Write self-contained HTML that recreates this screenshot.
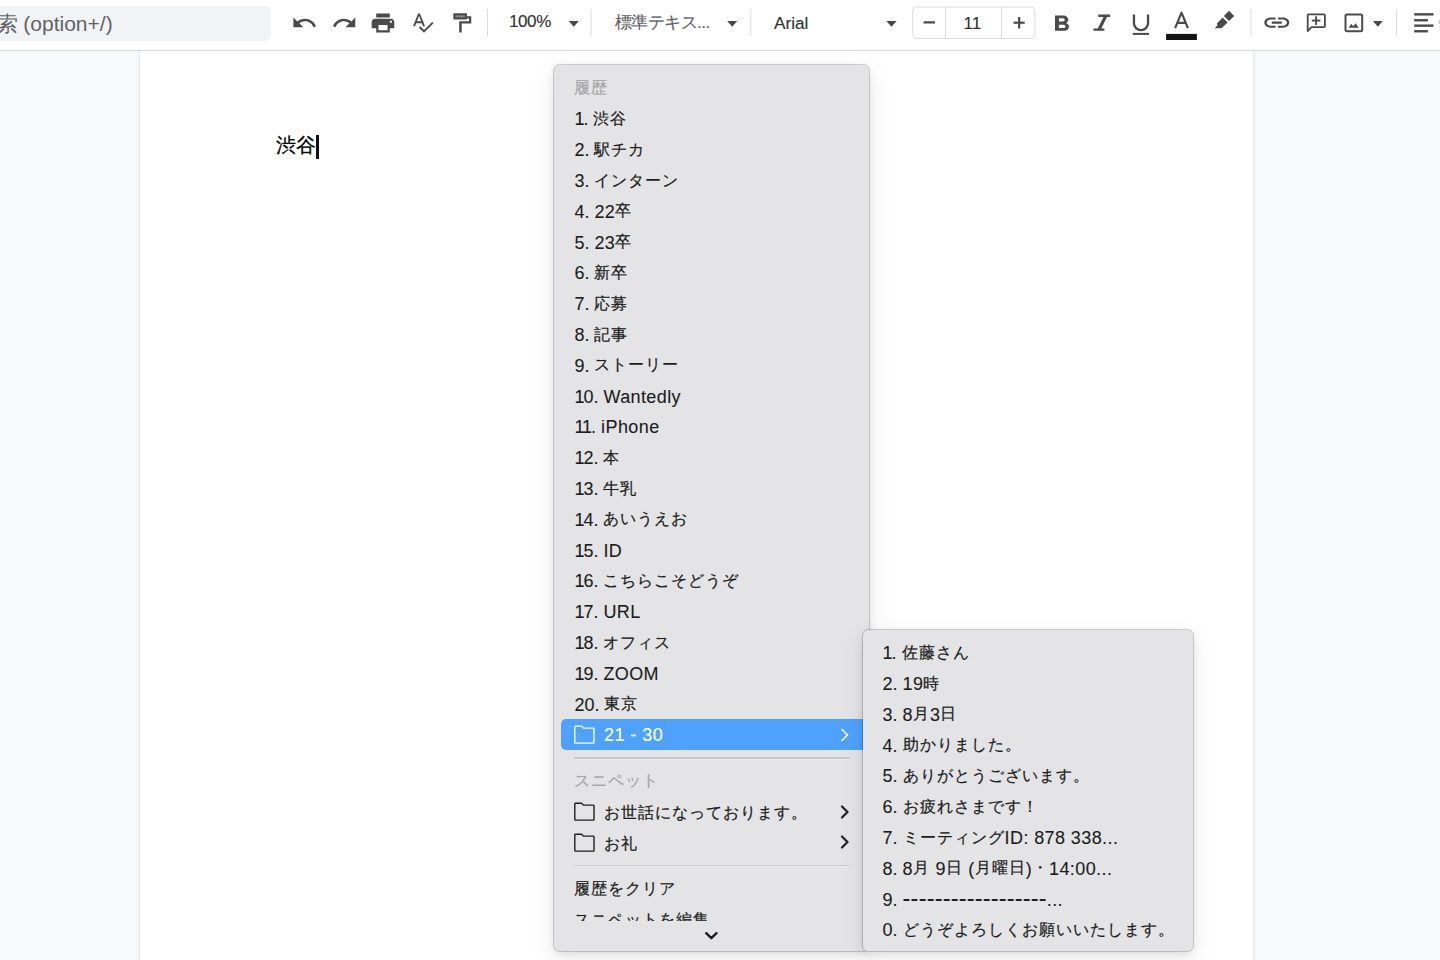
<!DOCTYPE html>
<html lang="ja">
<head>
<meta charset="utf-8">
<style>
*{margin:0;padding:0;box-sizing:border-box}
html,body{width:1440px;height:960px;overflow:hidden;background:#f8f9fb;font-family:"Liberation Sans",sans-serif;position:relative}
.abs{position:absolute}
#toolbar{position:absolute;left:0;top:0;width:1440px;height:51px;background:#fff;border-bottom:1px solid #d9d9d9;z-index:2}
#search{position:absolute;left:-20px;top:6px;width:291px;height:35px;border-radius:6px;background:#f2f3f5}
#search span{position:absolute;left:16.5px;top:4px;font-size:21px;color:#5f6368;white-space:nowrap;letter-spacing:0px}
.ico{position:absolute;fill:#444746}
.sep{position:absolute;top:9px;width:1px;height:27px;background:#dadce0}
.tt{position:absolute;font-size:17px;color:#333;white-space:nowrap;-webkit-text-stroke:0.15px currentColor}
.dd{position:absolute;width:0;height:0;border-left:5.5px solid transparent;border-right:5.5px solid transparent;border-top:5.5px solid #444746}
#page{position:absolute;left:140px;top:50px;width:1113px;height:920px;background:#fff;box-shadow:0 0 0 1px #e9e9e9,0 0 4px 1px rgba(0,0,0,.06)}
#doctext{position:absolute;left:276px;top:131.5px;font-size:20px;color:#000;white-space:nowrap;-webkit-text-stroke:0.3px #000}
#caret{position:absolute;left:316.2px;top:135px;width:2.7px;height:23.5px;background:#111}
.menu{position:absolute;background:#e4e4e6;border-radius:5.5px;box-shadow:0 0 0 1px rgba(0,0,0,.17),0 3px 10px rgba(0,0,0,.10),0 8px 28px rgba(0,0,0,.07)}
.dash{font-style:normal;font-size:23.4px;letter-spacing:0.22px;line-height:1px;position:relative;top:0.3px}
.row{position:absolute;left:0;height:30.8px;width:100%;font-size:18px;color:#1c1c1c;white-space:nowrap;-webkit-text-stroke:0.1px currentColor}
.o{font-style:normal;letter-spacing:-1px}
.r{font-style:normal;letter-spacing:0.4px}
.row span{position:absolute;left:20px;top:2.3px;line-height:30.8px}
.j{font-weight:normal;font-size:16px;letter-spacing:1px;position:relative;top:-1.5px;-webkit-text-stroke:0.22px currentColor}
.hdr{color:#a6a6a8}
.wh{color:#fff}
.hl{position:absolute;left:7px;width:306px;height:31.2px;background:#4ea2fd;border-radius:5px}
.msep{position:absolute;left:19.5px;width:276.5px;height:1.5px;background:#c8c8ca;box-shadow:0 1px 0 rgba(255,255,255,.35)}
.clip{position:absolute;left:0;width:100%;height:17px;overflow:hidden}
</style>
</head>
<body>
<div id="toolbar">
  <div id="search"><span>索 (option+/)</span></div>
<svg class="abs" style="left:0;top:0" width="1440" height="50" viewBox="0 0 1440 50"><path transform="matrix(1.1041 0 0 1.0667 291.192 10.133)" d="M12.5 8c-2.65 0-5.05.99-6.9 2.6L2 7v9h9l-3.62-3.62c1.39-1.16 3.16-1.88 5.12-1.88 3.54 0 6.55 2.31 7.6 5.5l2.37-.78C21.08 11.03 17.15 8 12.5 8z" fill="#4a4a4a"/><path transform="matrix(1.0899 0 0 1.0667 331.322 10.133)" d="M18.4 10.6C16.55 8.99 14.15 8 11.5 8c-4.65 0-8.58 3.03-9.96 7.22L3.9 16c1.05-3.19 4.05-5.5 7.6-5.5 1.95 0 3.73.72 5.12 1.88L13 16h9V7l-3.6 3.6z" fill="#4a4a4a"/><path transform="matrix(1.1300 0 0 1.0556 369.440 10.233)" d="M19 8H5c-1.66 0-3 1.34-3 3v6h4v4h12v-4h4v-6c0-1.66-1.34-3-3-3zm-3 11H8v-5h8v5zm3-7c-.55 0-1-.45-1-1s.45-1 1-1 1 .45 1 1-.45 1-1 1zm-1-9H6v4h12V3z" fill="#4a4a4a"/><path transform="matrix(0.9981 0 0 0.9949 410.545 10.415)" d="M12.45 16h2.09L9.43 3H7.57L2.46 16h2.09l1.12-3h5.64l1.14 3zm-6.02-5L8.5 5.48 10.57 11H6.43zm15.16.59l-8.09 8.09L9.83 16l-1.41 1.41 5.09 5.09L23 13l-1.41-1.41z" fill="#4a4a4a"/><rect x="453.3" y="13.15" width="13.7" height="6.45" rx="0.8" fill="#4a4a4a"/><rect x="455.4" y="15.4" width="9.5" height="1.9" fill="#8a8a8a"/><path d="M467 16.3 H471.25 V23.6 H461.7 V32.4 H459.2 V21.3 H469 V18.6 H467 Z" fill="#4a4a4a"/><rect x="487.0" y="9" width="1" height="27" fill="#dadce0"/><rect x="590.5" y="9" width="1" height="27" fill="#dadce0"/><rect x="750.3" y="9" width="1" height="27" fill="#dadce0"/><rect x="1250.5" y="9" width="1" height="27" fill="#dadce0"/><rect x="1396.0" y="9" width="1" height="27" fill="#dadce0"/><path d="M568.7 21.1 H578.8 L573.75 26.7 Z" fill="#4a4a4a"/><path d="M727.2 21.1 H737.2 L732.2 26.7 Z" fill="#4a4a4a"/><path d="M886.3 21.1 H896.7 L891.5 26.7 Z" fill="#4a4a4a"/><path d="M1372.9 21.1 H1382.8 L1377.85 26.7 Z" fill="#4a4a4a"/><rect x="912.7" y="7" width="122.2" height="31.4" rx="4" fill="none" stroke="#dadce0" stroke-width="1"/><rect x="945" y="7" width="1" height="31.4" fill="#dadce0"/><rect x="1001" y="7" width="1" height="31.4" fill="#dadce0"/><rect x="923.6" y="21.3" width="11.4" height="2.2" fill="#4a4a4a"/><rect x="1013.6" y="21.6" width="11.1" height="2.2" fill="#4a4a4a"/><rect x="1018.05" y="17" width="2.2" height="11.5" fill="#4a4a4a"/><path transform="matrix(1.3023 0 0 1.0929 1045.884 11.129)" d="M15.6 10.79c.97-.67 1.65-1.77 1.65-2.79 0-2.26-1.75-4-4-4H7v14h7.04c2.09 0 3.71-1.7 3.71-3.79 0-1.52-.86-2.82-2.15-3.42zM10 6.5h3c.83 0 1.5.67 1.5 1.5s-.67 1.5-1.5 1.5h-3v-3zm3.5 9H10v-3h3.5c.83 0 1.5.67 1.5 1.5s-.67 1.5-1.5 1.5z" fill="#4a4a4a"/><path d="M1098.3 14.6 H1110.1 V16.9 H1107 L1101.3 28.5 H1104.4 V30.8 H1093.5 V28.5 H1097.8 L1103.5 16.9 H1098.3 Z" fill="#4a4a4a"/><path d="M1133.95 14.6 V23.3 A7.05 6.9 0 0 0 1148.05 23.3 V14.6" fill="none" stroke="#4a4a4a" stroke-width="2.3"/><rect x="1132.8" y="32.9" width="16.2" height="2" fill="#4a4a4a"/><path d="M1175.1 28.2 L1181.5 12.6 L1187.9 28.2 M1177.3 22.9 H1185.7" fill="none" stroke="#4a4a4a" stroke-width="2.2" stroke-linejoin="round"/><rect x="1166.1" y="33.9" width="30.8" height="6.1" fill="#141414"/><path d="M1229 10.8 L1234.2 16 L1229 21.1 L1223.9 16 Z" fill="#4a4a4a"/><path d="M1222.6 17.6 L1227.6 22.6 L1221.5 28.3 L1214.7 28.3 L1217.5 25.3 L1216.9 23.4 Z" fill="#4a4a4a"/><path transform="matrix(1.2500 0 0 1.0400 1261.800 10.120)" d="M3.9 12c0-1.71 1.39-3.1 3.1-3.1h4V7H7c-2.76 0-5 2.24-5 5s2.24 5 5 5h4v-1.9H7c-1.71 0-3.1-1.39-3.1-3.1zM8 13h8v-2H8v2zm9-6h-4v1.9h4c1.71 0 3.1 1.39 3.1 3.1s-1.39 3.1-3.1 3.1h-4V17h4c2.76 0 5-2.24 5-5s-2.24-5-5-5z" fill="#4a4a4a"/><path d="M1307.7 31 V15.3 Q1307.7 14.4 1308.6 14.4 H1324 Q1324.9 14.4 1324.9 15.3 V26.3 Q1324.9 27.2 1324 27.2 H1311.5 Z" fill="none" stroke="#4a4a4a" stroke-width="1.8" stroke-linejoin="round"/><rect x="1311.8" y="19.6" width="8.6" height="1.9" fill="#4a4a4a"/><rect x="1315.15" y="16.3" width="1.9" height="8.6" fill="#4a4a4a"/><rect x="1345.5" y="14.55" width="16.7" height="16.7" rx="1.5" fill="none" stroke="#4a4a4a" stroke-width="2"/><path d="M1348.6 27.8 L1351.3 23.8 L1353.2 26.3 L1355.6 23.3 L1358.8 27.8 Z" fill="#4a4a4a"/><rect x="1414.2" y="13.15" width="19.3" height="2.4" fill="#4a4a4a"/><rect x="1414.2" y="19.05" width="13.7" height="2.4" fill="#4a4a4a"/><rect x="1414.2" y="24.45" width="19.3" height="2.4" fill="#4a4a4a"/><rect x="1414.2" y="30.05" width="13.7" height="2.4" fill="#4a4a4a"/><circle cx="1440.5" cy="22" r="2.2" fill="#c8c8c8"/></svg>
<div class="tt" style="left:509px;top:12px;font-size:17px;letter-spacing:-0.4px">100%</div>
<div class="tt" style="left:614.5px;top:11px;font-size:17px;color:#5f6368;letter-spacing:-0.5px">標準テキス...</div>
<div class="tt" style="left:774px;top:13px;font-size:17.2px">Arial</div>
<div class="tt" style="left:963.5px;top:12.5px;font-size:17.2px">11</div>
</div>
<div id="page"></div>
<div id="doctext">渋谷</div>
<div id="caret"></div>

<div class="menu" id="m1" style="left:554px;top:65px;width:315px;height:886px">
<div class="row hdr" style="top:6.40px"><span style="left:20.4px"><b class="j">履歴</b></span></div>
<div class="row " style="top:37.20px"><span style="left:20.4px"><i class="o">1</i>. <i class="r"><b class="j">渋谷</b></i></span></div>
<div class="row " style="top:68.00px"><span style="left:20.4px">2. <i class="r"><b class="j">駅チカ</b></i></span></div>
<div class="row " style="top:98.80px"><span style="left:20.4px">3. <i class="r"><b class="j">インターン</b></i></span></div>
<div class="row " style="top:129.60px"><span style="left:20.4px">4. <i class="r">22<b class="j">卒</b></i></span></div>
<div class="row " style="top:160.40px"><span style="left:20.4px">5. <i class="r">23<b class="j">卒</b></i></span></div>
<div class="row " style="top:191.20px"><span style="left:20.4px">6. <i class="r"><b class="j">新卒</b></i></span></div>
<div class="row " style="top:222.00px"><span style="left:20.4px">7. <i class="r"><b class="j">応募</b></i></span></div>
<div class="row " style="top:252.80px"><span style="left:20.4px">8. <i class="r"><b class="j">記事</b></i></span></div>
<div class="row " style="top:283.60px"><span style="left:20.4px">9. <i class="r"><b class="j">ストーリー</b></i></span></div>
<div class="row " style="top:314.40px"><span style="left:20.4px"><i class="o">1</i>0. <i class="r">Wantedly</i></span></div>
<div class="row " style="top:345.20px"><span style="left:20.4px"><i class="o">1</i><i class="o">1</i>. <i class="r">iPhone</i></span></div>
<div class="row " style="top:376.00px"><span style="left:20.4px"><i class="o">1</i>2. <i class="r"><b class="j">本</b></i></span></div>
<div class="row " style="top:406.80px"><span style="left:20.4px"><i class="o">1</i>3. <i class="r"><b class="j">牛乳</b></i></span></div>
<div class="row " style="top:437.60px"><span style="left:20.4px"><i class="o">1</i>4. <i class="r"><b class="j">あいうえお</b></i></span></div>
<div class="row " style="top:468.40px"><span style="left:20.4px"><i class="o">1</i>5. <i class="r">ID</i></span></div>
<div class="row " style="top:499.20px"><span style="left:20.4px"><i class="o">1</i>6. <i class="r"><b class="j">こちらこそどうぞ</b></i></span></div>
<div class="row " style="top:530.00px"><span style="left:20.4px"><i class="o">1</i>7. <i class="r">URL</i></span></div>
<div class="row " style="top:560.80px"><span style="left:20.4px"><i class="o">1</i>8. <i class="r"><b class="j">オフィス</b></i></span></div>
<div class="row " style="top:591.60px"><span style="left:20.4px"><i class="o">1</i>9. <i class="r">ZOOM</i></span></div>
<div class="row " style="top:622.40px"><span style="left:20.4px">20. <i class="r"><b class="j">東京</b></i></span></div>
<div class="hl" style="top:654.00px"></div>
<div class="row wh" style="top:653.20px"><span style="left:50px"><i class="r" style="letter-spacing:0.45px">21 - 30</i></span></div>
<svg class="abs" style="left:19px;top:658.9999999999999px" width="23" height="21" viewBox="0 0 23 21"><path d="M1.8 18.4 V2.9 Q1.8 2.2 2.5 2.2 H8.7 L10.4 4.1 H20.3 Q21 4.1 21 4.8 V18.4 Q21 19.1 20.3 19.1 H2.5 Q1.8 19.1 1.8 18.4 Z" fill="none" stroke="#fff" stroke-width="1.3" stroke-linejoin="round"/></svg>
<svg class="abs" style="left:286.2px;top:663.4px" width="10" height="14" viewBox="0 0 10 14"><path d="M2 1.5 L7.5 7 L2 12.5" fill="none" stroke="#fff" stroke-width="1.7" stroke-linecap="round" stroke-linejoin="round"/></svg>
<div class="msep" style="top:692.1px"></div>
<div class="row hdr" style="top:699.30px"><span style="left:20.4px"><b class="j">スニペット</b></span></div>
<div class="row " style="top:731.60px"><span style="left:50px"><b class="j">お世話になっております。</b></span></div>
<svg class="abs" style="left:19px;top:735.8000000000001px" width="23" height="21" viewBox="0 0 23 21"><path d="M1.8 18.4 V2.9 Q1.8 2.2 2.5 2.2 H8.7 L10.4 4.1 H20.3 Q21 4.1 21 4.8 V18.4 Q21 19.1 20.3 19.1 H2.5 Q1.8 19.1 1.8 18.4 Z" fill="none" stroke="#1e1e1e" stroke-width="1.4" stroke-linejoin="round"/></svg>
<svg class="abs" style="left:286px;top:739.6px" width="10" height="14" viewBox="0 0 10 14"><path d="M2 1.5 L7.5 7 L2 12.5" fill="none" stroke="#232323" stroke-width="2.2" stroke-linecap="round" stroke-linejoin="round"/></svg>
<div class="row " style="top:762.40px"><span style="left:50px"><b class="j">お礼</b></span></div>
<svg class="abs" style="left:19px;top:766.6px" width="23" height="21" viewBox="0 0 23 21"><path d="M1.8 18.4 V2.9 Q1.8 2.2 2.5 2.2 H8.7 L10.4 4.1 H20.3 Q21 4.1 21 4.8 V18.4 Q21 19.1 20.3 19.1 H2.5 Q1.8 19.1 1.8 18.4 Z" fill="none" stroke="#1e1e1e" stroke-width="1.4" stroke-linejoin="round"/></svg>
<svg class="abs" style="left:286px;top:770.4px" width="10" height="14" viewBox="0 0 10 14"><path d="M2 1.5 L7.5 7 L2 12.5" fill="none" stroke="#232323" stroke-width="2.2" stroke-linecap="round" stroke-linejoin="round"/></svg>
<div class="msep" style="top:799.8px"></div>
<div class="row " style="top:807.70px"><span style="left:20.4px"><b class="j">履歴をクリア</b></span></div>
<div class="clip" style="top:838.50px"><div class="row " style="top:0.00px"><span style="left:20.4px"><b class="j">スニペットを編集</b></span></div></div>
<svg class="abs" style="left:151.1px;top:867.2px" width="13" height="8" viewBox="0 0 13 8"><path d="M1.2 1.2 L6.35 6.2 L11.5 1.2" fill="none" stroke="#1e1e1e" stroke-width="2.4" stroke-linecap="round" stroke-linejoin="round"/></svg>
</div>
<div class="menu" id="m2" style="left:863px;top:629.8px;width:329.5px;height:321.2px">
<div class="row " style="top:6.20px"><span style="left:19.6px"><i class="o">1</i>. <i class="r"><b class="j">佐藤さん</b></i></span></div>
<div class="row " style="top:37.00px"><span style="left:19.6px">2. <i class="r">19<b class="j">時</b></i></span></div>
<div class="row " style="top:67.80px"><span style="left:19.6px">3. <i class="r">8<b class="j">月</b>3<b class="j">日</b></i></span></div>
<div class="row " style="top:98.60px"><span style="left:19.6px">4. <i class="r"><b class="j">助かりました。</b></i></span></div>
<div class="row " style="top:129.40px"><span style="left:19.6px">5. <i class="r"><b class="j">ありがとうございます。</b></i></span></div>
<div class="row " style="top:160.20px"><span style="left:19.6px">6. <i class="r"><b class="j">お疲れさまです！</b></i></span></div>
<div class="row " style="top:191.00px"><span style="left:19.6px">7. <i class="r"><b class="j">ミーティング</b>ID: 878 338...</i></span></div>
<div class="row " style="top:221.80px"><span style="left:19.6px">8. <i class="r">8<b class="j">月</b> 9<b class="j">日</b> (<b class="j">月曜日</b>)<b class="j">・</b>14:00...</i></span></div>
<div class="row " style="top:252.60px"><span style="left:19.6px">9. <i class="r"><i class="dash">------------------</i>...</i></span></div>
<div class="row " style="top:283.40px"><span style="left:19.6px">0. <i class="r"><b class="j">どうぞよろしくお願いいたします。</b></i></span></div>
</div>
</body>
</html>
